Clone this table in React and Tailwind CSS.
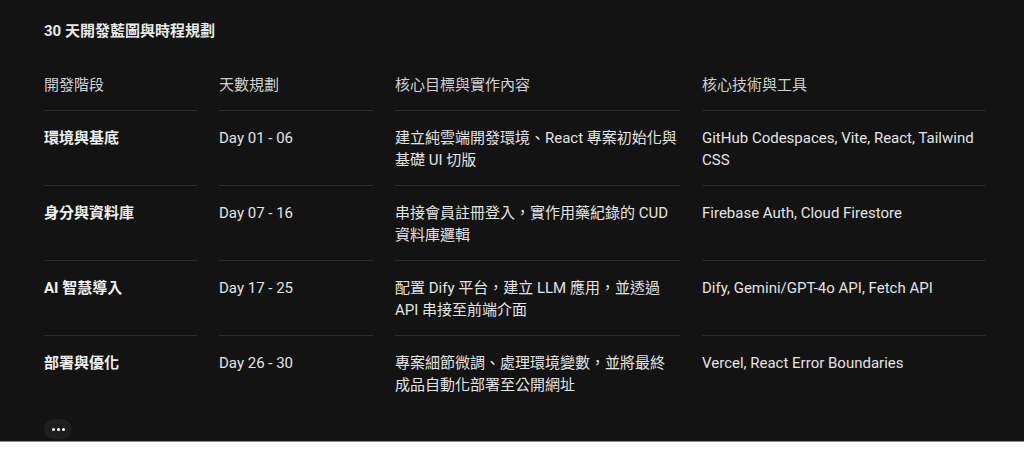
import React from "react";

const rows = [
  {
    phase: "環境與基底",
    days: "Day 01 - 06",
    goal: "建立純雲端開發環境、React 專案初始化與基礎 UI 切版",
    tools: "GitHub Codespaces, Vite, React, Tailwind CSS",
  },
  {
    phase: "身分與資料庫",
    days: "Day 07 - 16",
    goal: "串接會員註冊登入，實作用藥紀錄的 CUD 資料庫邏輯",
    tools: "Firebase Auth, Cloud Firestore",
  },
  {
    phase: "AI 智慧導入",
    days: "Day 17 - 25",
    goal: "配置 Dify 平台，建立 LLM 應用，並透過 API 串接至前端介面",
    tools: "Dify, Gemini/GPT-4o API, Fetch API",
  },
  {
    phase: "部署與優化",
    days: "Day 26 - 30",
    goal: "專案細節微調、處理環境變數，並將最終成品自動化部署至公開網址",
    tools: "Vercel, React Error Boundaries",
  },
];

const headers = ["開發階段", "天數規劃", "核心目標與實作內容", "核心技術與工具"];

function App() {
  return (
    <div className="font-['Roboto','Noto_Sans_CJK_TC',sans-serif]">
      <div className="h-[442px] bg-[#131313] border-b border-[#8c8c8c] px-[44px] pt-[20px] overflow-hidden">
        <h3 className="text-[15px] leading-[22px] font-bold text-[#e8e8e8]">30 天開發藍圖與時程規劃</h3>

        <div className="mt-[18px] grid grid-cols-[153px_154px_285px_284px] gap-x-[22px] text-[15px] leading-[22px]">
          {headers.map((h) => (
            <div key={h} className="py-[14px] border-b border-[#2c2c2c] text-[#d0d0d0]">
              {h}
            </div>
          ))}
          {rows.map((r, i) => {
            const last = i === rows.length - 1;
            const cell = last ? "pt-[16px] pb-[14px]" : "pt-[16px] pb-[14px] border-b border-[#2c2c2c]";
            return (
              <React.Fragment key={r.phase}>
                <div className={cell + " font-bold text-[#eeeeee]"}>{r.phase}</div>
                <div className={cell + " text-[#e3e3e3]"}>{r.days}</div>
                <div className={cell + " pr-[2px] text-[#e3e3e3]"}>{r.goal}</div>
                <div className={cell + " text-[#e3e3e3]"}>{r.tools}</div>
              </React.Fragment>
            );
          })}
        </div>

        <button className="mt-[9px] flex items-center justify-center gap-[2px] w-[28px] h-[20px] rounded-full bg-[#1f1f1f]">
          <span className="w-[3px] h-[3px] rounded-full bg-white" />
          <span className="w-[3px] h-[3px] rounded-full bg-white" />
          <span className="w-[3px] h-[3px] rounded-full bg-white" />
        </button>
      </div>
    </div>
  );
}

export default App;
